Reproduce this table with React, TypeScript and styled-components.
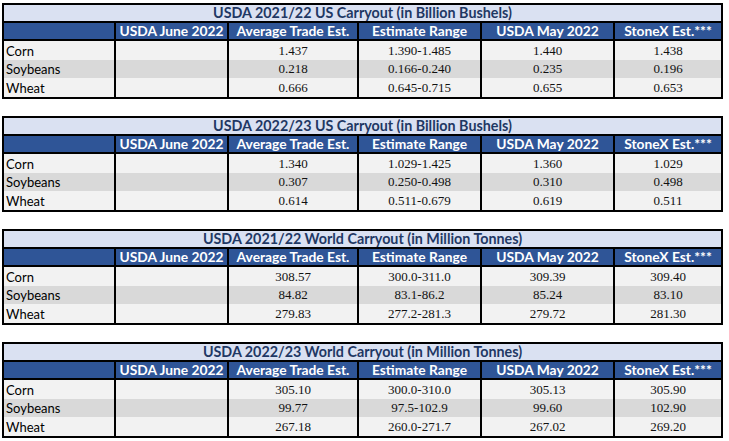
import React from "react";
import styled, { createGlobalStyle } from "styled-components";

const Global = createGlobalStyle`
  html, body { margin: 0; padding: 0; background: #ffffff; }
  body { font-family: Lato, "Liberation Sans", sans-serif; }
`;

const Page = styled.div`
  display: flex;
  flex-direction: column;
  gap: 17px;
  padding: 3px 0 0 2px;
  width: 729px;
  box-sizing: border-box;
`;

const Table = styled.div`
  display: grid;
  grid-template-columns: 110px 113px 130px 123px 133px 108px;
  grid-template-rows: 18px 18px 19px 18px 19px;
  width: 721px;
  box-sizing: border-box;
  border: 2px solid #000;
`;

const Title = styled.div`
  grid-column: 1 / -1;
  background: #dae1f2;
  color: #1f3864;
  font-family: Lato, "Liberation Sans", sans-serif;
  font-weight: 700;
  font-size: 14.3px;
  line-height: 16px;
  text-align: center;
  white-space: nowrap;
  border-bottom: 2px solid #000;
`;

const Head = styled.div<{ $first?: boolean }>`
  background: #2f5597;
  color: #ffffff;
  font-family: Lato, "Liberation Sans", sans-serif;
  font-weight: 700;
  font-size: 13.8px;
  line-height: 16px;
  text-align: center;
  white-space: nowrap;
  border-bottom: 2px solid #000;
  border-left: ${(p) => (p.$first ? "none" : "2px solid #000")};
`;

const Label = styled.div<{ $alt?: boolean }>`
  background: ${(p) => (p.$alt ? "#d9d9d9" : "#f2f2f2")};
  color: #000;
  font-family: Lato, "Liberation Sans", sans-serif;
  font-size: 13px;
  display: flex;
  align-items: center;
  padding-left: 2px;
`;

const Cell = styled.div<{ $alt?: boolean }>`
  background: ${(p) => (p.$alt ? "#d9d9d9" : "#f2f2f2")};
  color: #111;
  font-family: "Liberation Serif", "Times New Roman", serif;
  font-size: 13px;
  display: flex;
  align-items: center;
  justify-content: center;
  border-left: 2px solid #000;
`;

const headers = [
  "USDA June 2022",
  "Average Trade Est.",
  "Estimate Range",
  "USDA May 2022",
  "StoneX Est.***",
];

type Row = [string, string, string, string, string, string];

const tables: { title: string; rows: Row[] }[] = [
  {
    title: "USDA 2021/22 US Carryout (in Billion Bushels)",
    rows: [
      ["Corn", "", "1.437", "1.390-1.485", "1.440", "1.438"],
      ["Soybeans", "", "0.218", "0.166-0.240", "0.235", "0.196"],
      ["Wheat", "", "0.666", "0.645-0.715", "0.655", "0.653"],
    ],
  },
  {
    title: "USDA 2022/23 US Carryout (in Billion Bushels)",
    rows: [
      ["Corn", "", "1.340", "1.029-1.425", "1.360", "1.029"],
      ["Soybeans", "", "0.307", "0.250-0.498", "0.310", "0.498"],
      ["Wheat", "", "0.614", "0.511-0.679", "0.619", "0.511"],
    ],
  },
  {
    title: "USDA 2021/22 World Carryout (in Million Tonnes)",
    rows: [
      ["Corn", "", "308.57", "300.0-311.0", "309.39", "309.40"],
      ["Soybeans", "", "84.82", "83.1-86.2", "85.24", "83.10"],
      ["Wheat", "", "279.83", "277.2-281.3", "279.72", "281.30"],
    ],
  },
  {
    title: "USDA 2022/23 World Carryout (in Million Tonnes)",
    rows: [
      ["Corn", "", "305.10", "300.0-310.0", "305.13", "305.90"],
      ["Soybeans", "", "99.77", "97.5-102.9", "99.60", "102.90"],
      ["Wheat", "", "267.18", "260.0-271.7", "267.02", "269.20"],
    ],
  },
];

export default function App() {
  return (
    <>
      <Global />
      <Page>
        {tables.map((t) => (
          <Table key={t.title}>
            <Title>{t.title}</Title>
            <Head $first />
            {headers.map((h) => (
              <Head key={h}>{h}</Head>
            ))}
            {t.rows.map((r, i) => (
              <React.Fragment key={r[0]}>
                <Label $alt={i === 1}>{r[0]}</Label>
                {r.slice(1).map((v, j) => (
                  <Cell key={j} $alt={i === 1}>
                    {v}
                  </Cell>
                ))}
              </React.Fragment>
            ))}
          </Table>
        ))}
      </Page>
    </>
  );
}
